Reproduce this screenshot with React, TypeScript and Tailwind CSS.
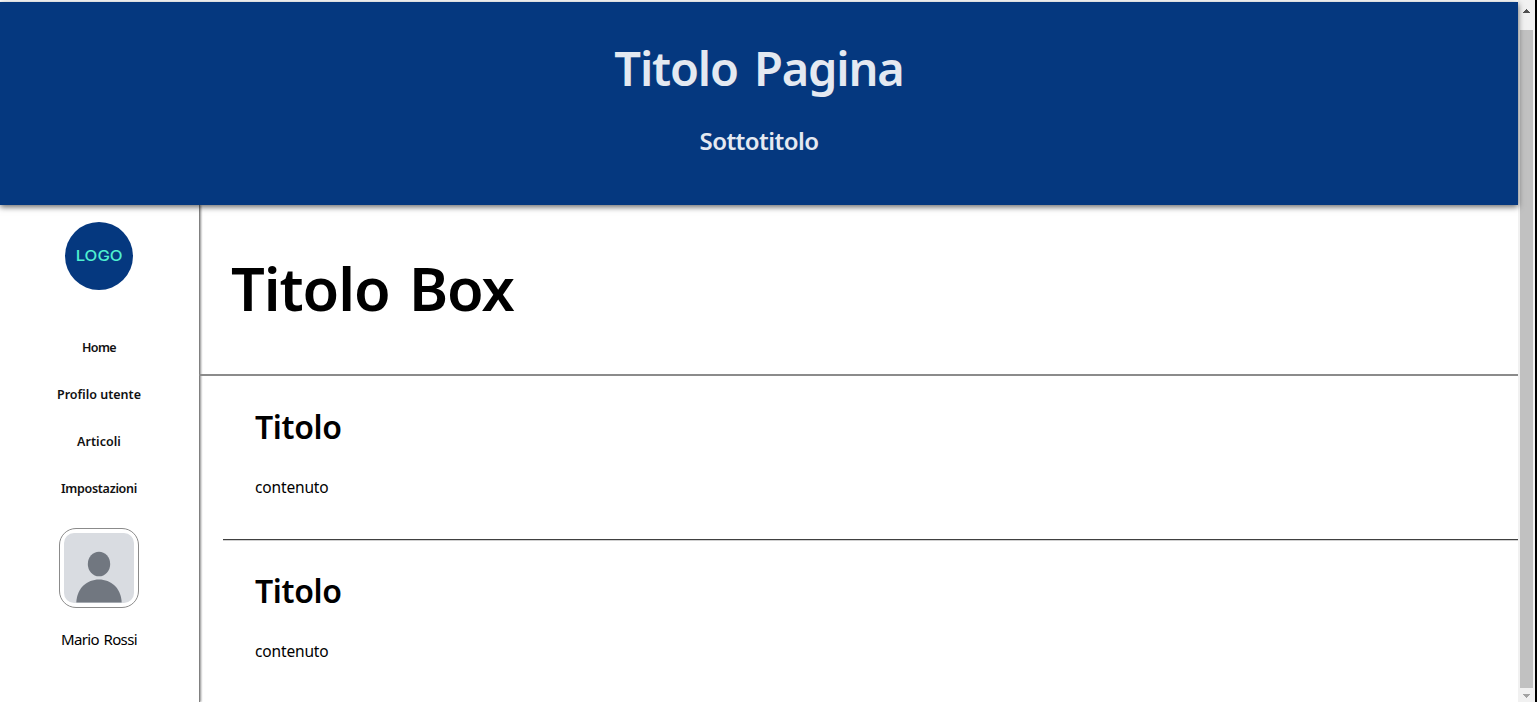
import React from "react";

const links = [
  { label: "Home", style: "tracking-[-0.6px]" },
  { label: "Profilo utente", style: "tracking-[0px]" },
  { label: "Articoli", style: "tracking-[0.05px]" },
  { label: "Impostazioni", style: "tracking-[-0.3px]" },
];

function Article({ last = false }: { last?: boolean }) {
  return (
    <article
      className={
        last
          ? "ml-[23px] pl-8 pt-[31px]"
          : "ml-[23px] h-[164px] border-b border-[#404040] pl-8 pt-[31px] shadow-[0_1px_0_#d0d0d0]"
      }
    >
      <h2 className="text-[32px] font-semibold leading-10 tracking-[-0.35px]">
        Titolo
      </h2>
      <p className="mt-7 text-[15.5px] leading-6 tracking-[-0.15px]">
        contenuto
      </p>
    </article>
  );
}

function Scrollbar() {
  return (
    <div className="flex w-[19px] shrink-0 border-r-2 border-black bg-[#f1f1f1]">
      <div className="flex w-full flex-col items-center">
        <svg className="h-[30px] w-[17px] shrink-0" viewBox="0 0 17 30">
          <path d="M5 13h7v-1h-1v-1h-1v-1H9V9H8v1H7v1H6v1H5z" fill="#505050" />
        </svg>
        <div className="w-[13px] flex-1 bg-[#c1c1c1]" />
        <svg className="h-[14px] w-[17px] shrink-0" viewBox="0 0 17 14">
          <path d="M5 6h7v1h-1v1h-1v1H9v1H8V9H7V8H6V7H5z" fill="#a3a3a3" />
        </svg>
      </div>
    </div>
  );
}

export default function App() {
  return (
    <div className="flex h-[702px] w-[1537px] overflow-hidden bg-white font-['Noto_Sans','Open_Sans',sans-serif] text-black">
      <div className="flex min-w-0 flex-1 flex-col pt-[2px]">
        <header className="relative z-10 h-[203px] shrink-0 bg-[#05387f] pt-[38px] text-center text-[#e4e9f1] shadow-[0_2px_6px_rgba(0,0,0,0.6)]">
          <h1 className="text-[47px] font-semibold leading-[56px] tracking-[-1.15px] [word-spacing:5px]">
            Titolo Pagina
          </h1>
          <p className="mt-[30px] text-2xl font-semibold leading-[30px] tracking-[-0.55px]">
            Sottotitolo
          </p>
        </header>
        <div className="flex min-h-0 flex-1">
          <aside className="flex w-[200px] shrink-0 flex-col items-center border-r border-[#808080] pr-px pt-[17px] shadow-[1px_0_2px_rgba(0,0,0,0.45)]">
            <div className="flex size-[68px] shrink-0 items-center justify-center rounded-full bg-[#05387f] pt-px font-['Inter',sans-serif] text-[15px] text-[#4ff0d0]">
              <span className="scale-x-[1.11] font-medium">LOGO</span>
            </div>
            <nav className="mt-[33.5px] flex flex-col items-center text-[12.5px] font-semibold text-[#111]">
              {links.map((l) => (
                <a key={l.label} className={`h-[47.3px] leading-[47px] ${l.style}`}>
                  {l.label}
                </a>
              ))}
            </nav>
            <div className="mt-[15px] size-20 shrink-0 rounded-[17px] border border-[#8b8b8b] p-1">
              <svg className="size-[70px] rounded-[10px]" viewBox="0 0 70 70">
                <rect width="70" height="70" fill="#d9dce1" />
                <ellipse cx="35" cy="31" rx="11.2" ry="12.3" fill="#717780" />
                <path d="M12.3 69.5C13 55 23 46.5 35 46.5S57 55 57.7 69.5z" fill="#717780" />
              </svg>
            </div>
            <p className="mt-[19px] text-[15px] leading-6 tracking-[-0.6px] [word-spacing:1px]">
              Mario Rossi
            </p>
          </aside>
          <main className="min-w-0 flex-1">
            <section className="-ml-px h-[171px] border-b-2 border-[#8b8b8b] pl-8 pt-12">
              <h2 className="text-[59.5px] font-semibold leading-[70px] tracking-[-1.1px] [word-spacing:5px]">
                Titolo Box
              </h2>
            </section>
            <Article />
            <Article last />
          </main>
        </div>
      </div>
      <Scrollbar />
    </div>
  );
}
